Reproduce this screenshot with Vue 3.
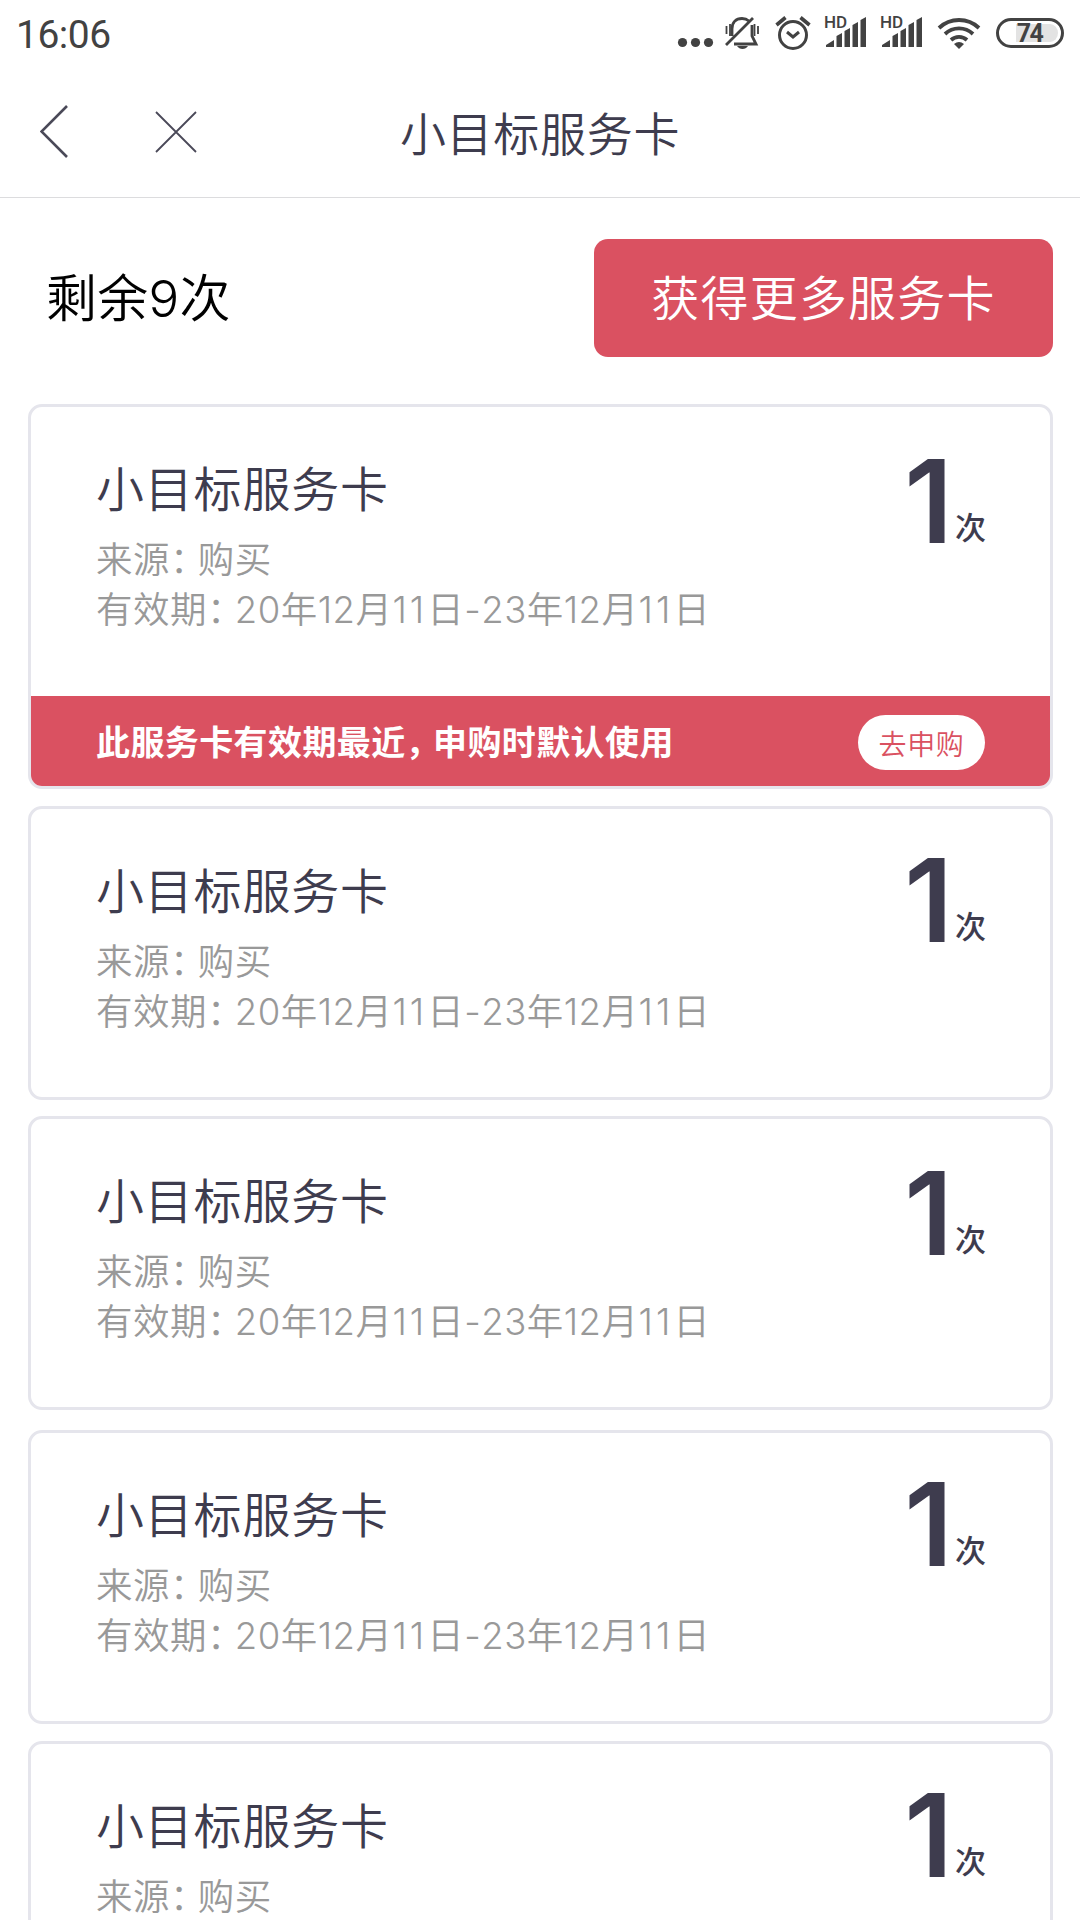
<template>
  <div class="page">
    <header class="status-bar">
      <span class="clock">16:06</span>
      <svg class="status-icons" width="406" height="60" viewBox="0 0 406 60">
        <g fill="#424242">
          <circle cx="9.5" cy="42.5" r="4.6" />
          <circle cx="22.5" cy="42.5" r="4.6" />
          <circle cx="35.5" cy="42.5" r="4.6" />
        </g>
        <g fill="none" stroke="#424242" stroke-width="2.8">
          <path d="M59 36V29c0-7 4-10.5 10-10.5 3 0 5 .8 7 2.5M79 25v11l4 8H61M53 45l27-27" />
          <path d="M53.5 26v8M57 24v12M81.5 24v12M85 26v8" stroke-width="1.8" />
        </g>
        <path d="M64 46h11q-2 3-5.5 3t-5.5-3z" fill="#424242" />
        <g fill="none" stroke="#424242" stroke-width="3">
          <circle cx="120" cy="35" r="13.5" />
          <path d="M114 32l6 5 6-5" />
          <path d="M103.5 25l9-7.5M136.5 25l-9-7.5" stroke-width="3.6" />
        </g>
        <g v-for="x in [153, 209]" :key="x" fill="#424242" :transform="`translate(${x} 0)`">
          <text x="-2" y="28" class="hd">HD</text>
          <path d="M0 47v-2l8-5v7zM10.500 47V36l5.500-3v14zM18.500 47V31l5.500-3v19zM26.500 47V25l5.500-3v25zM34.500 47V20l5.500-3v30z" />
        </g>
        <g fill="none" stroke="#424242" stroke-width="3.8">
          <path d="M266 28a29 29 0 0 1 40 0" />
          <path d="M272 34a20.5 20.5 0 0 1 28 0" />
          <path d="M278 40a12 12 0 0 1 16 0" />
        </g>
        <path d="M281 44q5-4 10 0l-5 5z" fill="#424242" />
        <rect x="324.5" y="19.5" width="65" height="27" rx="13.5" fill="none" stroke="#424242" stroke-width="3" />
        <path d="M343 24h34a8 9 0 0 1 0 18h-34z" fill="#e3e3e3" />
        <text x="356.5" y="42" text-anchor="middle" class="battery">74</text>
      </svg>
    </header>

    <nav class="nav-bar">
      <svg class="back" width="28" height="54" viewBox="0 0 28 54" fill="none" stroke="#4a4958" stroke-width="2.6">
        <path d="M27 1L1.5 26.5 27 52" />
      </svg>
      <svg class="close" width="42" height="42" viewBox="0 0 42 42" fill="none" stroke="#4a4958" stroke-width="1.8">
        <path d="M1 1l40 40M41 1L1 41" />
      </svg>
      <h1>小目标服务卡</h1>
    </nav>

    <section class="summary">
      <span class="remaining">剩余9次</span>
      <button class="more">获得更多服务卡</button>
    </section>

    <main class="cards">
      <article v-for="(card, i) in cards" :key="i" class="card">
        <div class="card-body">
          <div class="info">
            <h2>{{ card.name }}</h2>
            <p>来源<i>：</i>{{ card.source }}</p>
            <p>
              有效期<i>：</i><span
                v-for="(part, n) in card.period.split(/(11)/)"
                :key="n"
                :class="{ ones: part === '11' }"
              >{{ part }}</span>
            </p>
          </div>
          <div class="count"><b>{{ card.count }}</b><span>次</span></div>
        </div>
        <div v-if="card.nearest" class="notice">
          <span>此服务卡有效期最近<i>，</i>申购时默认使用</span>
          <button>去申购</button>
        </div>
      </article>
    </main>
  </div>
</template>

<script setup>
const cards = Array.from({ length: 5 }, (_, i) => ({
  name: '小目标服务卡',
  source: '购买',
  period: '20年12月11日-23年12月11日',
  count: 1,
  nearest: i === 0,
}))
</script>

<style>
body {
  background: #fff;
}
</style>

<style scoped>
* {
  box-sizing: border-box;
}

.page {
  width: 1080px;
  height: 1920px;
  overflow: hidden;
  background: #fff;
  color: #3e3c4e;
  font-family: Inter, "Noto Sans CJK SC", sans-serif;
  font-weight: 350;
  white-space: nowrap;
}

h1, h2, p {
  margin: 0;
  font-weight: 350;
}

/* half-width punctuation */
i {
  font-style: normal;
  font-feature-settings: "halt";
}

button {
  padding: 0;
  border: 0;
  font-family: "Noto Sans CJK SC", sans-serif;
  font-weight: 350;
}

.status-bar {
  display: flex;
  justify-content: space-between;
  height: 66px;
  padding: 0 1px 0 16px;
  font-family: Roboto, sans-serif;
}

.clock {
  color: #424242;
  font-size: 39px;
  font-weight: 400;
  line-height: 71px;
  letter-spacing: -0.5px;
}

.status-icons {
  flex: none;
}

.hd {
  font-size: 17px;
  font-weight: 500;
}

.battery {
  fill: #424242;
  font-size: 25px;
  font-weight: 700;
  letter-spacing: -1.5px;
}

.nav-bar {
  display: grid;
  grid-template-columns: 40px 115px 1fr 155px;
  align-items: center;
  height: 132px;
  border-bottom: 1px solid #dcdcde;
}

.back {
  grid-column: 2;
  grid-row: 1;
}

.close {
  grid-column: 3;
  grid-row: 1;
}

h1 {
  grid-column: 1 / -1;
  grid-row: 1;
  padding-bottom: 2px;
  text-align: center;
  font-family: "Noto Sans CJK SC", sans-serif;
  font-size: 46px;
  line-height: 64px;
  letter-spacing: 0.7px;
}

.summary {
  display: flex;
  align-items: center;
  justify-content: space-between;
  height: 206px;
  padding: 0 27px 6px 46px;
}

.remaining {
  padding-bottom: 6px;
  color: #000;
  font-size: 51px;
  letter-spacing: 0.3px;
}

.more {
  width: 459px;
  height: 118px;
  padding-bottom: 6px;
  border-radius: 14px;
  background: #da5161;
  color: #fff;
  font-size: 48px;
  letter-spacing: 1.2px;
}

.cards {
  display: flex;
  flex-direction: column;
  padding: 0 27px 0 28px;
}

.card {
  flex: none;
  overflow: hidden;
  margin-bottom: 17px;
  border: 3px solid #e5e5ec;
  border-radius: 14px;
}

.card:nth-child(2) {
  margin-bottom: 16px;
}

.card:nth-child(3) {
  margin-bottom: 20px;
}

.card-body {
  display: flex;
  justify-content: space-between;
  align-items: flex-start;
  height: 288px;
  padding: 44px 64px 0 65px;
}

.card:first-child .card-body {
  height: 289px;
}

h2 {
  margin-bottom: 14px;
  font-family: "Noto Sans CJK SC", sans-serif;
  font-size: 48px;
  line-height: 70px;
  letter-spacing: 0.8px;
}

p {
  color: #999;
  font-size: 36.5px;
  font-kerning: none;
  line-height: 50px;
  letter-spacing: 0.5px;
}

p i {
  margin-right: 9px;
}

.ones {
  letter-spacing: 3px;
}

.count {
  display: flex;
  align-items: flex-end;
  margin-top: 4px;
}

.card:first-child .count,
.card:nth-child(3) .count {
  margin-top: 7px;
}

.count b {
  margin-right: 2px;
  font-size: 115px;
  font-weight: 560;
  line-height: 88px;
}

.count span {
  margin-bottom: 5px;
  font-family: "Noto Sans CJK SC", sans-serif;
  font-size: 31px;
  font-weight: 500;
  line-height: 31px;
}

.notice {
  display: flex;
  align-items: center;
  justify-content: space-between;
  height: 90px;
  padding: 0 65px;
  background: #da5161;
  color: #fff;
  font-family: "Noto Sans CJK SC", sans-serif;
  font-size: 34px;
  font-weight: 700;
  letter-spacing: 0.4px;
}

.notice > span {
  padding-bottom: 2px;
}

.notice i {
  margin-right: 10px;
}

.notice button {
  width: 127px;
  height: 55px;
  margin-top: 2px;
  border-radius: 28px;
  background: #fff;
  color: #da5161;
  font-size: 28px;
  line-height: 56px;
  letter-spacing: 0.6px;
}
</style>
